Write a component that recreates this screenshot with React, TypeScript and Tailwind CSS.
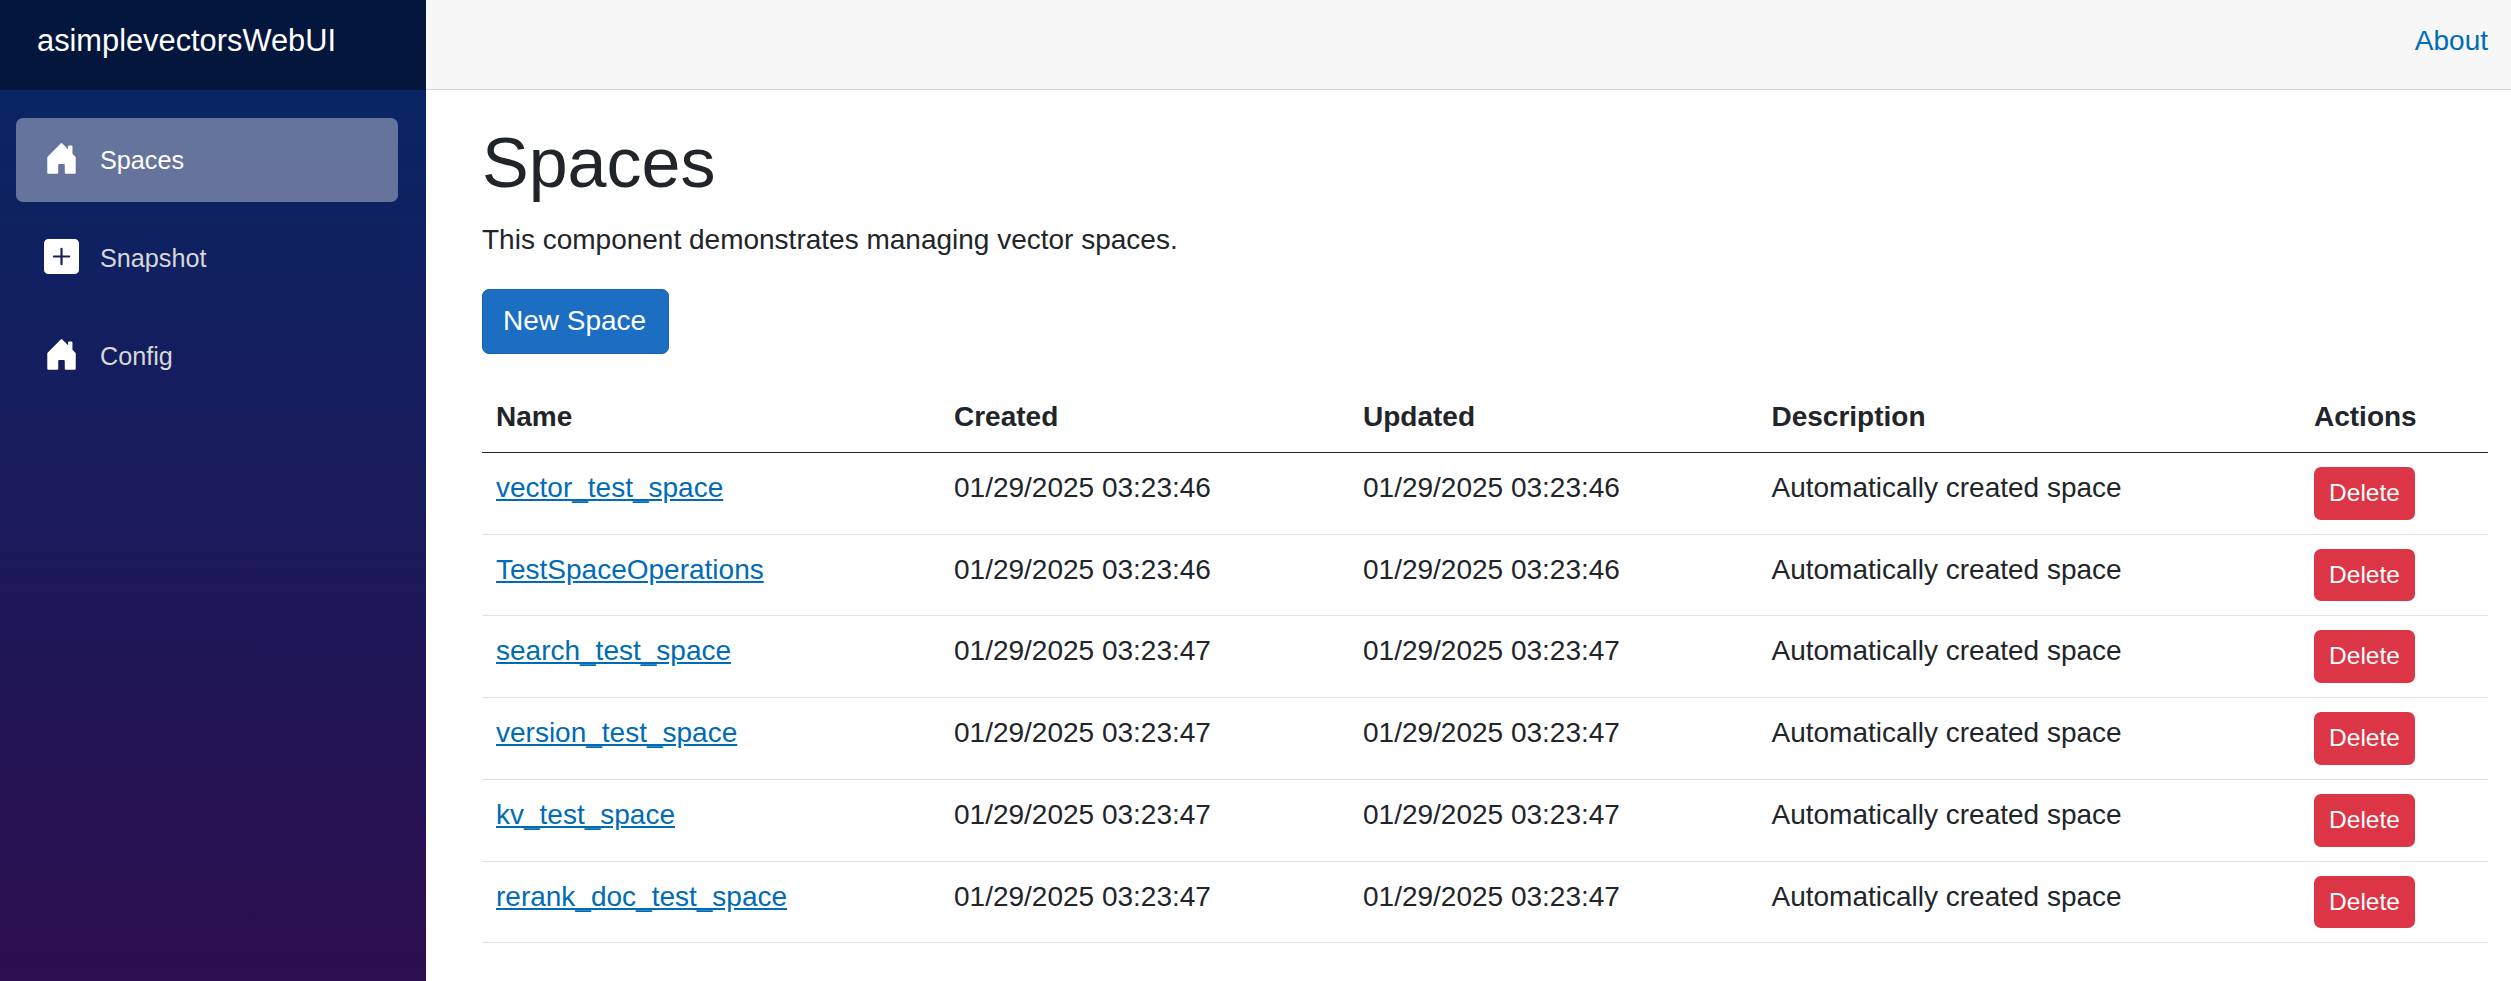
import React from "react";
import { BsPlusSquareFill } from "react-icons/bs";

type NavEntry = {
  label: string;
  icon: React.ComponentType<{ className?: string }>;
  active?: boolean;
};
type Space = { name: string; created: string; updated: string; description: string };

function HouseIcon({ className }: { className?: string }) {
  return (
    <svg viewBox="0 0 16 16" fill="currentColor" className={className} aria-hidden="true">
      <path d="M6.5 14.5v-3.505c0-.245.25-.495.5-.495h2c.25 0 .5.25.5.5v3.5a.5.5 0 0 0 .5.5h4a.5.5 0 0 0 .5-.5v-7a.5.5 0 0 0-.146-.354L13 5.793V2.5a.5.5 0 0 0-.5-.5h-1a.5.5 0 0 0-.5.5v1.293L8.354 1.146a.5.5 0 0 0-.708 0l-6 6A.5.5 0 0 0 1.5 7.5v7a.5.5 0 0 0 .5.5h4a.5.5 0 0 0 .5-.5Z" />
    </svg>
  );
}

const navEntries: NavEntry[] = [
  { label: "Spaces", icon: HouseIcon, active: true },
  { label: "Snapshot", icon: BsPlusSquareFill },
  { label: "Config", icon: HouseIcon },
];

const makeSpace = (name: string, time: string): Space => ({
  name,
  created: time,
  updated: time,
  description: "Automatically created space",
});

const spaces: Space[] = [
  makeSpace("vector_test_space", "01/29/2025 03:23:46"),
  makeSpace("TestSpaceOperations", "01/29/2025 03:23:46"),
  makeSpace("search_test_space", "01/29/2025 03:23:47"),
  makeSpace("version_test_space", "01/29/2025 03:23:47"),
  makeSpace("kv_test_space", "01/29/2025 03:23:47"),
  makeSpace("rerank_doc_test_space", "01/29/2025 03:23:47"),
];

const columns = "grid grid-cols-[458px_409px_408.5px_542.5px_188px] border-b";

function NavItem({ label, icon: Icon, active }: NavEntry) {
  return (
    <li className="pb-3.5">
      <a
        href="#"
        className={
          active
            ? "flex h-[84px] items-center rounded-[7px] bg-white/37 pl-7 text-white"
            : "flex h-[84px] items-center rounded-[7px] pl-7 text-[#d7d7d7]"
        }
      >
        <Icon className="mr-[21px] mb-[3px] size-[35px] text-white" />
        <span>{label}</span>
      </a>
    </li>
  );
}

function Sidebar() {
  return (
    <aside className="w-[426px] shrink-0 bg-[linear-gradient(180deg,rgb(5,39,103)_-8px,#3a0647_1300px)]">
      <div className="flex h-[90px] items-center bg-black/40 pb-2 pl-[37px] text-[30.8px] leading-[46px] text-white">
        <a href="#">asimplevectorsWebUI</a>
      </div>
      <nav className="pt-7 pr-7 pl-4 text-[25.2px]">
        <ul>
          {navEntries.map((entry) => (
            <NavItem key={entry.label} {...entry} />
          ))}
        </ul>
      </nav>
    </aside>
  );
}

function SpacesTable() {
  return (
    <div role="table" className="mt-[27.9px] w-[2006px]">
      <div role="row" className={`${columns} h-[71px] border-[#212529] font-bold`}>
        {["Name", "Created", "Updated", "Description", "Actions"].map((title) => (
          <div role="columnheader" key={title} className="p-3.5">
            {title}
          </div>
        ))}
      </div>
      {spaces.map((space) => (
        <div role="row" key={space.name} className={`${columns} h-[81.75px] border-[#dee2e6]`}>
          <div role="cell" className="p-3.5">
            <a href="#" className="text-[#006bb7] underline">
              {space.name}
            </a>
          </div>
          <div role="cell" className="p-3.5">{space.created}</div>
          <div role="cell" className="p-3.5">{space.updated}</div>
          <div role="cell" className="p-3.5">{space.description}</div>
          <div role="cell" className="p-3.5">
            <button className="block h-[52.75px] w-[101px] rounded-[7px] bg-[#dc3545] text-[24.5px] leading-[36.75px] text-white">
              Delete
            </button>
          </div>
        </div>
      ))}
    </div>
  );
}

export default function App() {
  return (
    <div className="flex h-[981px] w-[2511px] overflow-hidden bg-white font-['Liberation_Sans',Arial,sans-serif] text-[28px] leading-[42px] text-[#212529]">
      <Sidebar />
      <main className="min-w-0 flex-1">
        <header className="flex h-[90px] items-center justify-end border-b border-[#d6d5d5] bg-[#f7f7f7] pr-[23px] pb-2">
          <a href="#" className="text-[#006bb7]">
            About
          </a>
        </header>
        <article className="pt-[31px] pl-14">
          <h1 className="mb-3.5 text-[70px] leading-[84px]">Spaces</h1>
          <p className="mb-7">This component demonstrates managing vector spaces.</p>
          <button className="block h-[65px] w-[187px] rounded-[7px] border border-[#1861ac] bg-[#1b6ec2] pr-0.5 pb-0.5 text-white">
            New Space
          </button>
          <SpacesTable />
        </article>
      </main>
    </div>
  );
}
